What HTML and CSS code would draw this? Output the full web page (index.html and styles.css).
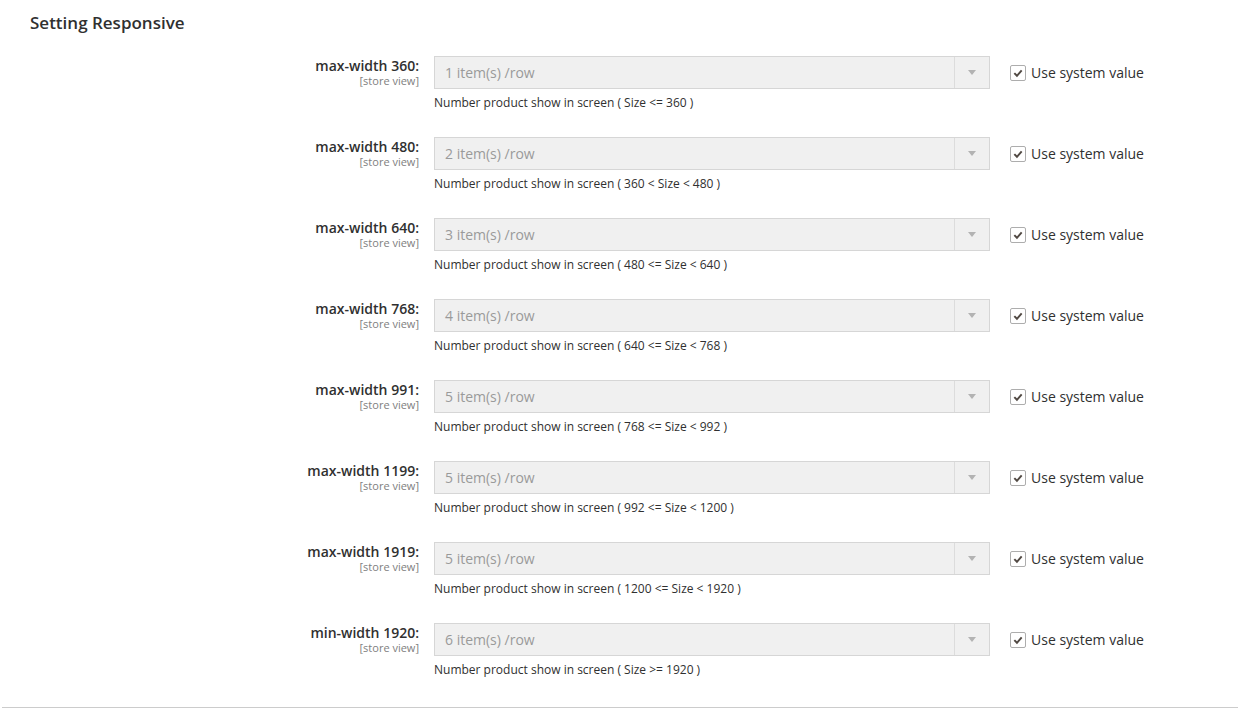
FILE: index.html
```html
<!DOCTYPE html>
<html>
<head>
<meta charset="utf-8">
<link rel="stylesheet" href="styles.css">
</head>
<body>
<div class="section">
  <h3 class="section-title">Setting Responsive</h3>
  <div class="rows">
    <div class="row">
      <div class="label"><span class="label-text">max-width 360:</span><span class="scope">[store view]</span></div>
      <div class="field">
        <div class="select"><span class="select-value">1 item(s) /row</span><span class="select-arrow"></span></div>
        <p class="note">Number product show in screen ( Size &lt;= 360 )</p>
      </div>
      <label class="use-default"><span class="checkbox"><svg viewBox="0 0 16 16" width="16" height="16"><path d="M3.8 8.2 L6.8 11.2 L12.2 5" fill="none" stroke="#514943" stroke-width="2.2"/></svg></span>Use system value</label>
    </div>
    <div class="row">
      <div class="label"><span class="label-text">max-width 480:</span><span class="scope">[store view]</span></div>
      <div class="field">
        <div class="select"><span class="select-value">2 item(s) /row</span><span class="select-arrow"></span></div>
        <p class="note">Number product show in screen ( 360 &lt; Size &lt; 480 )</p>
      </div>
      <label class="use-default"><span class="checkbox"><svg viewBox="0 0 16 16" width="16" height="16"><path d="M3.8 8.2 L6.8 11.2 L12.2 5" fill="none" stroke="#514943" stroke-width="2.2"/></svg></span>Use system value</label>
    </div>
    <div class="row">
      <div class="label"><span class="label-text">max-width 640:</span><span class="scope">[store view]</span></div>
      <div class="field">
        <div class="select"><span class="select-value">3 item(s) /row</span><span class="select-arrow"></span></div>
        <p class="note">Number product show in screen ( 480 &lt;= Size &lt; 640 )</p>
      </div>
      <label class="use-default"><span class="checkbox"><svg viewBox="0 0 16 16" width="16" height="16"><path d="M3.8 8.2 L6.8 11.2 L12.2 5" fill="none" stroke="#514943" stroke-width="2.2"/></svg></span>Use system value</label>
    </div>
    <div class="row">
      <div class="label"><span class="label-text">max-width 768:</span><span class="scope">[store view]</span></div>
      <div class="field">
        <div class="select"><span class="select-value">4 item(s) /row</span><span class="select-arrow"></span></div>
        <p class="note">Number product show in screen ( 640 &lt;= Size &lt; 768 )</p>
      </div>
      <label class="use-default"><span class="checkbox"><svg viewBox="0 0 16 16" width="16" height="16"><path d="M3.8 8.2 L6.8 11.2 L12.2 5" fill="none" stroke="#514943" stroke-width="2.2"/></svg></span>Use system value</label>
    </div>
    <div class="row">
      <div class="label"><span class="label-text">max-width 991:</span><span class="scope">[store view]</span></div>
      <div class="field">
        <div class="select"><span class="select-value">5 item(s) /row</span><span class="select-arrow"></span></div>
        <p class="note">Number product show in screen ( 768 &lt;= Size &lt; 992 )</p>
      </div>
      <label class="use-default"><span class="checkbox"><svg viewBox="0 0 16 16" width="16" height="16"><path d="M3.8 8.2 L6.8 11.2 L12.2 5" fill="none" stroke="#514943" stroke-width="2.2"/></svg></span>Use system value</label>
    </div>
    <div class="row">
      <div class="label"><span class="label-text">max-width 1199:</span><span class="scope">[store view]</span></div>
      <div class="field">
        <div class="select"><span class="select-value">5 item(s) /row</span><span class="select-arrow"></span></div>
        <p class="note">Number product show in screen ( 992 &lt;= Size &lt; 1200 )</p>
      </div>
      <label class="use-default"><span class="checkbox"><svg viewBox="0 0 16 16" width="16" height="16"><path d="M3.8 8.2 L6.8 11.2 L12.2 5" fill="none" stroke="#514943" stroke-width="2.2"/></svg></span>Use system value</label>
    </div>
    <div class="row">
      <div class="label"><span class="label-text">max-width 1919:</span><span class="scope">[store view]</span></div>
      <div class="field">
        <div class="select"><span class="select-value">5 item(s) /row</span><span class="select-arrow"></span></div>
        <p class="note">Number product show in screen ( 1200 &lt;= Size &lt; 1920 )</p>
      </div>
      <label class="use-default"><span class="checkbox"><svg viewBox="0 0 16 16" width="16" height="16"><path d="M3.8 8.2 L6.8 11.2 L12.2 5" fill="none" stroke="#514943" stroke-width="2.2"/></svg></span>Use system value</label>
    </div>
    <div class="row">
      <div class="label"><span class="label-text">min-width 1920:</span><span class="scope">[store view]</span></div>
      <div class="field">
        <div class="select"><span class="select-value">6 item(s) /row</span><span class="select-arrow"></span></div>
        <p class="note">Number product show in screen ( Size &gt;= 1920 )</p>
      </div>
      <label class="use-default"><span class="checkbox"><svg viewBox="0 0 16 16" width="16" height="16"><path d="M3.8 8.2 L6.8 11.2 L12.2 5" fill="none" stroke="#514943" stroke-width="2.2"/></svg></span>Use system value</label>
    </div>
  </div>
</div>
</body>
</html>
```

FILE: styles.css
```css
* { box-sizing: border-box; }
html, body {
  margin: 0;
  padding: 0;
  background: #ffffff;
  font-family: "Open Sans", "Liberation Sans", sans-serif;
  color: #303030;
}
.section {
  margin-left: 2px;
  padding-bottom: 28px;
  border-bottom: 1px solid #cccccc;
}
.section-title {
  margin: 0;
  padding: 11px 0 0 28px;
  font-size: 17px;
  line-height: 23px;
  font-weight: 600;
  color: #303030;
}
.rows {
  padding-top: 22px;
}
.row {
  display: flex;
  align-items: flex-start;
  margin-bottom: 25px;
}
.row:last-child {
  margin-bottom: 0;
}
.label {
  width: 432px;
  padding-right: 15px;
  display: flex;
  flex-direction: column;
  align-items: flex-end;
  text-align: right;
}
.label-text {
  padding-top: 1px;
  font-size: 14px;
  line-height: 17px;
  font-weight: 600;
  color: #303030;
}
.scope {
  margin-top: -1px;
  font-size: 11px;
  line-height: 15px;
  color: #808080;
}
.field {
  width: 556px;
}
.select {
  display: flex;
  height: 33px;
  border: 1px solid #d6d6d6;
  background: #f0f0f0;
}
.select-value {
  flex: 1;
  padding-left: 10px;
  font-size: 14px;
  line-height: 31px;
  color: #9a9a9a;
}
.select-arrow {
  width: 35px;
  border-left: 1px solid #dcdcdc;
  display: flex;
  align-items: center;
  justify-content: center;
}
.select-arrow::after {
  content: "";
  width: 0;
  height: 0;
  border-left: 4px solid transparent;
  border-right: 4px solid transparent;
  border-top: 5px solid #b3b3b3;
}
.note {
  margin: 5px 0 0;
  font-size: 12px;
  line-height: 18px;
  color: #303030;
}
.use-default {
  margin-left: 20px;
  margin-top: 9px;
  display: flex;
  align-items: center;
  font-size: 14px;
  line-height: 16px;
  color: #303030;
}
.checkbox {
  width: 16px;
  height: 16px;
  border: 1px solid #adadad;
  border-radius: 2px;
  background: #ffffff;
  margin-right: 5px;
  display: flex;
  align-items: center;
  justify-content: center;
}
.checkbox svg {
  width: 14px;
  height: 14px;
}
```
